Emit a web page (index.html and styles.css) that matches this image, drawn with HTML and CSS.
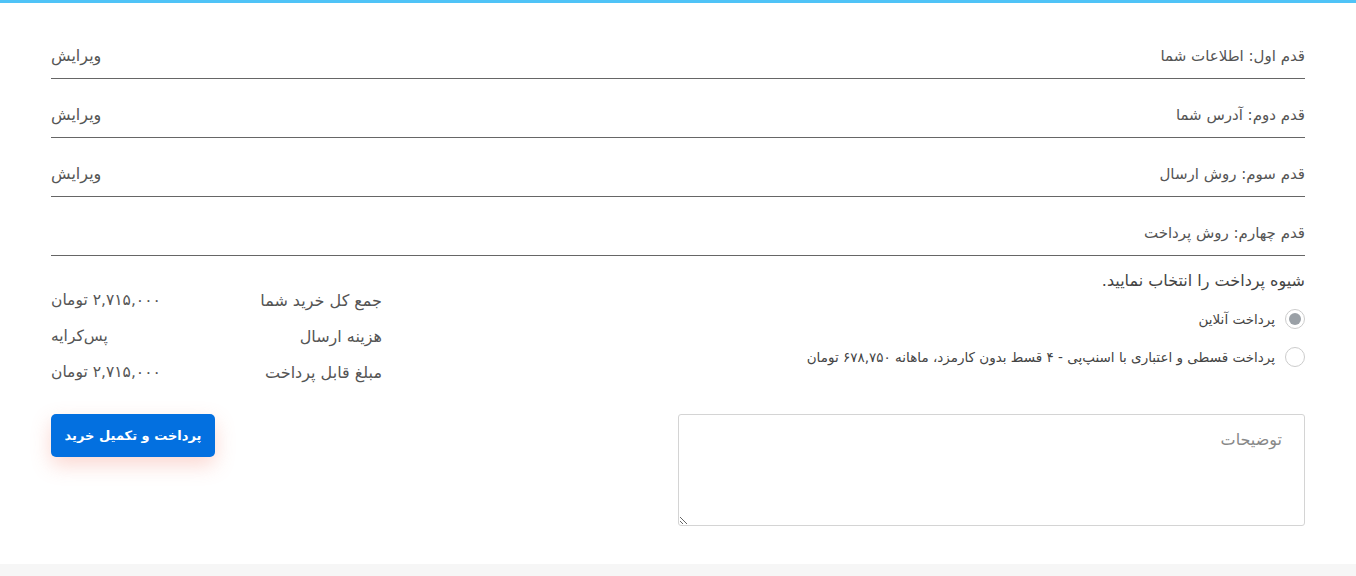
FILE: index.html
```html
<!DOCTYPE html>
<html lang="fa" dir="rtl">
<head>
    <meta charset="UTF-8">
    <meta name="viewport" content="width=device-width, initial-scale=1.0">
    <title>تکمیل خرید</title>
    <link rel="stylesheet" href="styles.css">
</head>
<body>
    <div class="topbar"></div>

    <div class="container">
        <div class="step">
            <span class="step-title">قدم اول: اطلاعات شما</span>
            <a href="#" class="step-edit">ویرایش</a>
        </div>
        <div class="step">
            <span class="step-title">قدم دوم: آدرس شما</span>
            <a href="#" class="step-edit">ویرایش</a>
        </div>
        <div class="step">
            <span class="step-title">قدم سوم: روش ارسال</span>
            <a href="#" class="step-edit">ویرایش</a>
        </div>
        <div class="step">
            <span class="step-title">قدم چهارم: روش پرداخت</span>
        </div>

        <div class="checkout">
            <div class="payment">
                <p class="payment-title">شیوه پرداخت را انتخاب نمایید.</p>

                <label class="option">
                    <input type="radio" name="payment" checked>
                    <span class="radio"></span>
                    <span>پرداخت آنلاین</span>
                </label>
                <label class="option">
                    <input type="radio" name="payment">
                    <span class="radio"></span>
                    <span>پرداخت قسطی و اعتباری با اسنپ‌پی - ۴ قسط بدون کارمزد، ماهانه ۶۷۸,۷۵۰ تومان</span>
                </label>

                <textarea class="notes" placeholder="توضیحات"></textarea>
            </div>

            <div class="summary">
                <div class="summary-list">
                    <div class="summary-row">
                        <span>جمع کل خرید شما</span>
                        <span class="amount">۲,۷۱۵,۰۰۰ تومان</span>
                    </div>
                    <div class="summary-row">
                        <span>هزینه ارسال</span>
                        <span class="amount">پس‌کرایه</span>
                    </div>
                    <div class="summary-row">
                        <span>مبلغ قابل پرداخت</span>
                        <span class="amount">۲,۷۱۵,۰۰۰ تومان</span>
                    </div>
                </div>

                <button class="btn-submit">پرداخت و تکمیل خرید</button>
            </div>
        </div>
    </div>

    <footer class="footer"></footer>
</body>
</html>
```

FILE: styles.css
```css
body{
    margin: 0;
    font-family: "DejaVu Sans", sans-serif;
    color: #555;
    background-color: #fff;
}
.topbar{
    height: 3px;
    background-color: #4fc3f7;
}
.container{
    padding: 17px 51px 0 51px;
}

/* checkout steps */
.step{
    height: 59px;
    display: flex;
    align-items: flex-end;
    justify-content: space-between;
    padding-bottom: 10px;
    box-sizing: border-box;
    border-bottom: 1px solid #666;
    line-height: 24px;
}
.step-title{
    font-size: 15px;
}
.step-edit{
    font-size: 16px;
    color: #555;
    text-decoration: none;
}

/* payment + summary */
.checkout{
    display: flex;
    justify-content: space-between;
}
.payment{
    width: 627px;
}
.payment-title{
    margin: 13px 0 7px 0;
    font-size: 16px;
    line-height: 24px;
    color: #444;
}
.option{
    height: 38px;
    display: flex;
    align-items: center;
    gap: 10px;
    font-size: 13.5px;
    color: #444;
    cursor: pointer;
}
.option input{
    display: none;
}
.radio{
    width: 20px;
    height: 20px;
    border: 1px solid #ccc;
    border-radius: 50%;
    box-sizing: border-box;
    flex-shrink: 0;
    position: relative;
}
.option input:checked + .radio::after{
    content: "";
    position: absolute;
    top: 3px;
    left: 3px;
    width: 12px;
    height: 12px;
    border-radius: 50%;
    background-color: #9aa0a6;
}
.notes{
    display: block;
    width: 100%;
    height: 112px;
    margin-top: 38px;
    padding: 15px 22px;
    box-sizing: border-box;
    border: 1px solid #d4d4d4;
    border-radius: 3px;
    font-family: inherit;
    font-size: 16px;
}
.notes::placeholder{
    color: #888;
}

.summary{
    width: 331px;
    padding-top: 26px;
    display: flex;
    flex-direction: column;
    align-items: flex-end;
}
.summary-list{
    width: 100%;
}
.summary-row{
    height: 36px;
    display: flex;
    align-items: center;
    justify-content: space-between;
    font-size: 16px;
}
.amount{
    font-size: 15.5px;
}
.btn-submit{
    margin-top: 24px;
    width: 164px;
    height: 43px;
    border: none;
    border-radius: 5px;
    background-color: #0370e0;
    color: #fff;
    font-family: inherit;
    font-size: 13px;
    font-weight: bold;
    box-shadow: 0 8px 20px rgba(240, 110, 90, 0.28);
    cursor: pointer;
}

.footer{
    margin-top: 38px;
    height: 12px;
    background-color: #f6f6f6;
}
```
